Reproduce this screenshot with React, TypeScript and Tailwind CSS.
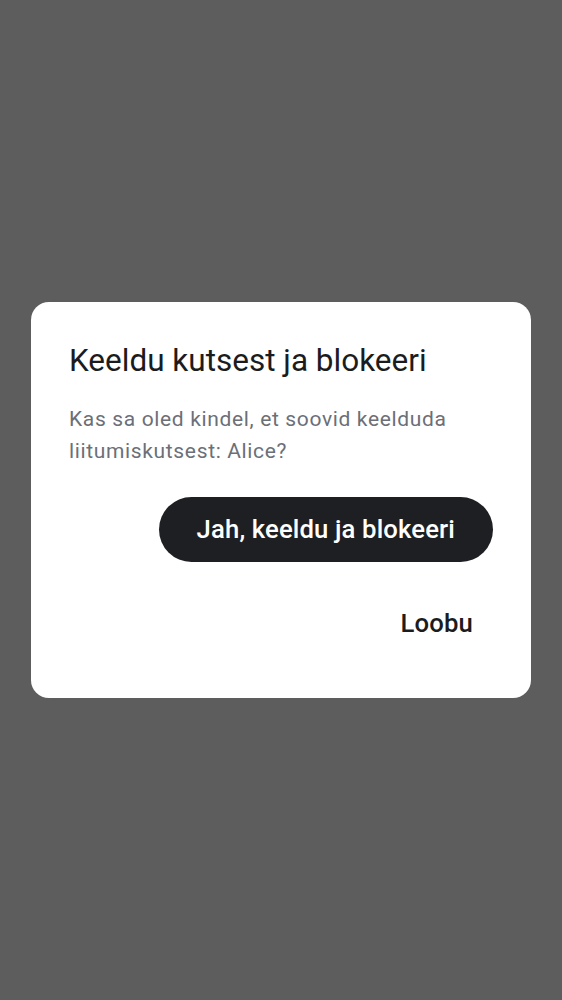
export default function App() {
  return (
    <div
      className="h-screen w-full bg-[#5d5d5d] flex items-center justify-center px-[31px]"
      style={{ fontFamily: "Roboto, 'Noto Sans', sans-serif" }}
    >
      <div className="w-full bg-white rounded-[18px] px-[38px] pt-[38px] pb-[43px] flex flex-col">
        <h2 className="text-[31.5px] leading-[42px] text-[#1b1c20] font-normal">
          Keeldu kutsest ja blokeeri
        </h2>
        <p className="mt-[22px] text-[21px] leading-[31.5px] tracking-[0.65px] text-[#6b6f78]">
          Kas sa oled kindel, et soovid keelduda liitumiskutsest: Alice?
        </p>
        <div className="mt-[30px] flex flex-col items-end gap-[29px]">
          <button className="h-[65px] rounded-full bg-[#1e1f23] px-[38px] text-[25.7px] tracking-[0.13px] font-medium text-white">
            Jah, keeldu ja blokeeri
          </button>
          <button className="h-[64px] px-[20px] text-[25.7px] tracking-[0.13px] font-medium text-[#1b1c20]">
            Loobu
          </button>
        </div>
      </div>
    </div>
  );
}
